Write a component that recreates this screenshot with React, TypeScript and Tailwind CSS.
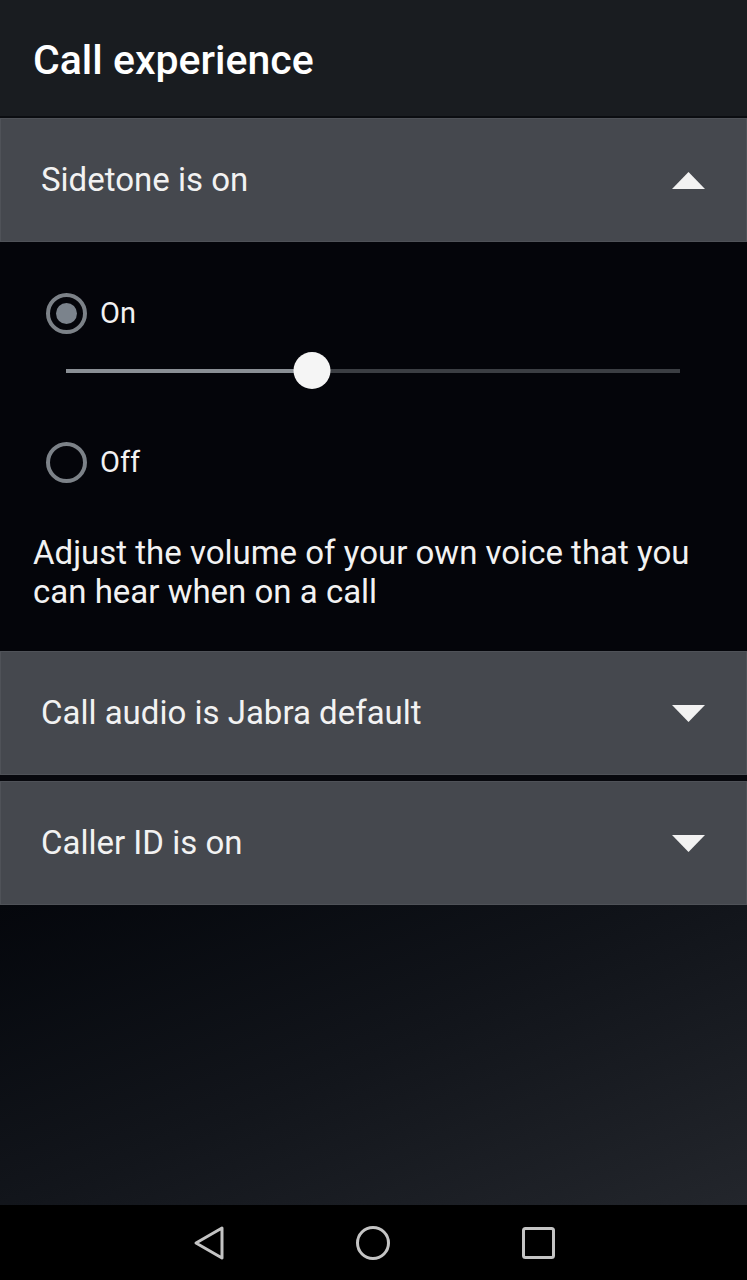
import { useState } from 'react'

interface Section {
  id: string
  label: string
}

const sections: Section[] = [
  { id: 'audio', label: 'Call audio is Jabra default' },
  { id: 'callerid', label: 'Caller ID is on' },
]

function Caret({ up }: { up?: boolean }) {
  return (
    <svg width="33" height="17" viewBox="0 0 33 17" className="shrink-0">
      {up ? (
        <polygon points="16.5,0 33,17 0,17" fill="#f2f2f2" />
      ) : (
        <polygon points="0,0 33,0 16.5,17" fill="#f2f2f2" />
      )}
    </svg>
  )
}

function Radio({ checked, label }: { checked: boolean; label: string }) {
  return (
    <div className="flex items-center">
      <div className="flex h-[41px] w-[41px] items-center justify-center rounded-full border-[4px] border-[#7c8288]">
        {checked && <div className="h-[21px] w-[21px] rounded-full bg-[#7b838c]" />}
      </div>
      <span className="ml-[13px] text-[29px] leading-none text-[#f2f2f2]">{label}</span>
    </div>
  )
}

function Row({ label, open }: { label: string; open?: boolean }) {
  return (
    <div className="flex h-[124px] items-center justify-between border border-[#4f5258] bg-[#45484e] pl-[40px] pr-[41px]">
      <span className="text-[33px] text-[#f2f2f2]">{label}</span>
      <Caret up={open} />
    </div>
  )
}

export default function App() {
  const [sidetone] = useState(true)
  const level = 40

  return (
    <div
      className="flex h-[1280px] w-full flex-col bg-[#04050a]"
      style={{ fontFamily: 'Roboto, "Noto Sans", sans-serif' }}
    >
      <div className="flex h-[116px] items-center bg-[#191c20] pl-[33px]">
        <h1 className="pt-[4px] text-[41px] font-medium leading-none text-white">Call experience</h1>
      </div>
      <div className="h-[2px] bg-[#0b0d11]" />

      <Row label="Sidetone is on" open />

      <div className="px-[46px] pb-[40px] pt-[51px]">
        <Radio checked={sidetone} label="On" />

        <div className="relative ml-[20px] mr-[21px] mt-[18px] h-[37px]">
          <div className="absolute left-0 right-0 top-[17px] flex h-[4px]">
            <div className="h-full bg-[#8a8f95]" style={{ width: `${level}%` }} />
            <div className="h-full flex-1 bg-[#3b3e43]" />
          </div>
          <div
            className="absolute top-0 h-[37px] w-[37px] -translate-x-1/2 rounded-full bg-[#f5f5f5]"
            style={{ left: `${level}%` }}
          />
        </div>

        <div className="mt-[53px]">
          <Radio checked={!sidetone} label="Off" />
        </div>

        <p className="-ml-[13px] mt-[50px] text-[33px] leading-[39px] text-[#f2f2f2]">
          Adjust the volume of your own voice that you can hear when on a call
        </p>
      </div>

      <Row label={sections[0].label} />
      <div className="h-[6px] bg-[#07080d]" />
      <Row label={sections[1].label} />

      <div className="flex-1 bg-gradient-to-br from-[#05070c] via-[#12151b] to-[#23262c]" />

      <div className="flex h-[75px] items-center justify-center bg-black">
        <div className="flex w-[362px] items-center justify-between">
          <svg width="32" height="36" viewBox="0 0 32 36" fill="none">
            <path
              d="M29 3 L3 18 L29 33 Z"
              stroke="#c4c4c4"
              strokeWidth="3"
              strokeLinejoin="round"
            />
          </svg>
          <svg width="36" height="36" viewBox="0 0 36 36" fill="none">
            <circle cx="18" cy="18" r="15.5" stroke="#c4c4c4" strokeWidth="3" />
          </svg>
          <svg width="33" height="32" viewBox="0 0 33 32" fill="none">
            <rect x="1.5" y="1.5" width="30" height="29" rx="2" stroke="#c4c4c4" strokeWidth="3" />
          </svg>
        </div>
      </div>
    </div>
  )
}
